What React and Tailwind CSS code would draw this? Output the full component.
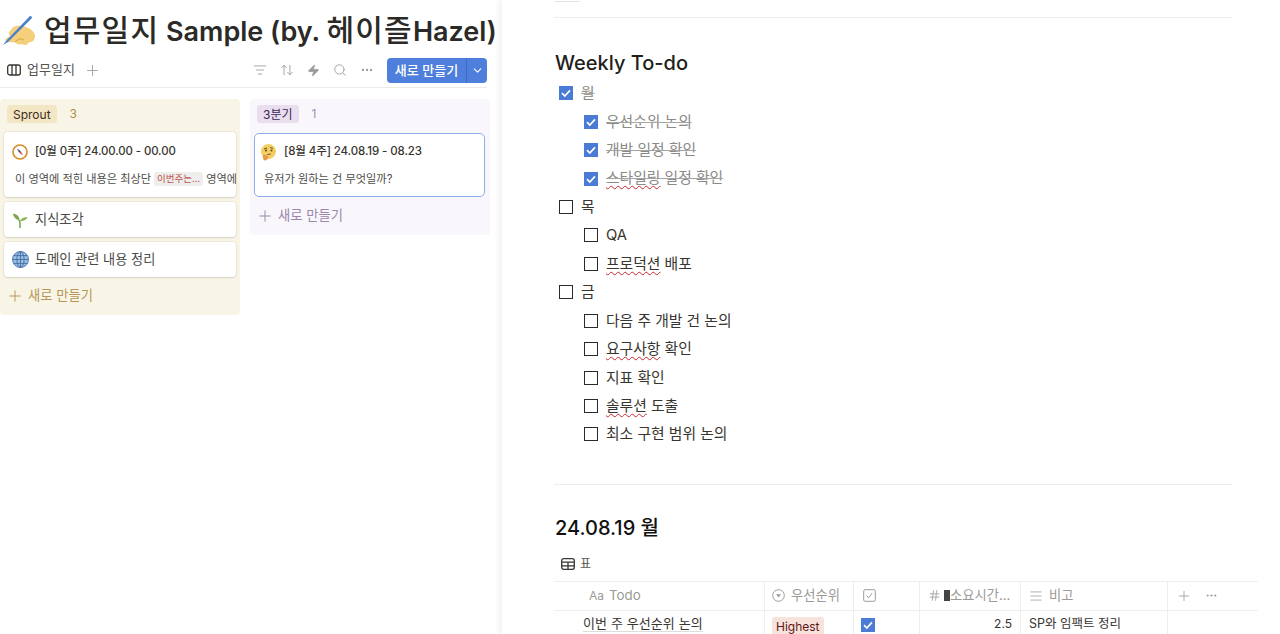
import React from 'react';
import {
  ArrowUpDown,
  AlignJustify,
  ChevronDown,
  Ellipsis,
  Hash,
  ListFilter,
  Plus,
  Search,
  Zap,
} from 'lucide-react';

const FONT = "font-['Inter','Noto_Sans_CJK_KR','Noto_Sans',sans-serif]";

// hand emoji
function WritingHand() {
  return (
    <svg width="32" height="34" viewBox="0 0 32 34">
      <path d="M8 17 C9 13 15 12 19 13 C25 14 32 18 32 23 C32 27 29 30 26 29 C25 32 22 33 19 31 C16 32 13 31 12 29 C9 29 5 30 3 28 C1 26 5 24 8 23 C5 22 5 19 8 17Z" fill="#f4cf7c" />
      <path d="M12 29 C15 26 17 25 21 27" stroke="#d9a441" strokeWidth="1" fill="none" />
      <path d="M0 32 L3 28 L26 4 C27 2 29 3 29 5 L5 29 Z" fill="#4a7fc9" />
    </svg>
  );
}

function Compass() {
  return (
    <svg width="16" height="16" viewBox="0 0 16 16">
      <circle cx="8" cy="8" r="7" fill="#fff" stroke="#d98a1f" strokeWidth="1.6" />
      <path d="M5 4.5 L8.8 7.2 L7.2 8.8Z" fill="#33405a" />
      <path d="M11 11.5 L8.8 7.2 L7.2 8.8Z" fill="#c9465a" />
    </svg>
  );
}

function Seedling() {
  return (
    <svg width="16" height="18" viewBox="0 0 16 18">
      <path d="M8 17 C8 13 8 11 7.5 9" stroke="#7da84f" strokeWidth="1.6" fill="none" />
      <path d="M7.5 9.5 C4.5 9 1.5 6.5 1 2.5 C4.5 3 7.5 5 7.5 9.5Z" fill="#7da84f" />
      <path d="M8 10 C9 7.5 12 6 15.5 6 C14.5 9 11.5 10.5 8 10Z" fill="#8cb65c" />
    </svg>
  );
}

function Globe() {
  return (
    <svg width="17" height="17" viewBox="0 0 17 17">
      <circle cx="8.5" cy="8.5" r="8" fill="#9cbce0" stroke="#4f7fb8" />
      <ellipse cx="8.5" cy="8.5" rx="3.6" ry="8" fill="none" stroke="#3f6fa8" strokeWidth="0.9" />
      <path d="M8.5 .5 V16.5 M.5 8.5 H16.5 M1.8 4.6 H15.2 M1.8 12.4 H15.2" stroke="#3f6fa8" strokeWidth="0.9" />
    </svg>
  );
}

function Thinking() {
  return (
    <svg width="15" height="17" viewBox="0 0 15 17">
      <circle cx="7.5" cy="7.5" r="7.5" fill="#f3cf63" />
      <path d="M3 5 L6 4 M9 3.5 L12 4.5" stroke="#6b4f1d" strokeWidth="1" />
      <circle cx="5" cy="6.5" r="1" fill="#5a4218" />
      <circle cx="10.5" cy="6.5" r="1" fill="#5a4218" />
      <path d="M6 10.5 L10 10" stroke="#8a5f22" strokeWidth="1" />
      <path d="M2 11 C4 10 7 12 7.5 13 C7 15 5 17 3.5 16.5 C2 16 1.5 13 2 11Z" fill="#e89a45" />
    </svg>
  );
}

function TableIcon() {
  return (
    <svg width="14" height="12" viewBox="0 0 14 12" fill="none" stroke="#37352f" strokeWidth="1.3">
      <rect x="0.7" y="0.7" width="12.6" height="10.6" rx="2" />
      <path d="M0.7 4.2 H13.3 M0.7 7.8 H13.3 M7 4.2 V11.3" />
    </svg>
  );
}

function Check({ on }) {
  if (on) {
    return (
      <span className="w-[14px] h-[14px] bg-[#4a7bd5] flex items-center justify-center shrink-0">
        <svg width="12" height="12" viewBox="0 0 12 12" fill="none">
          <path d="M2 6.2 L4.8 9 L10 3.4" stroke="#fff" strokeWidth="1.7" />
        </svg>
      </span>
    );
  }
  return <span className="w-[14px] h-[14px] border-[1.5px] border-[#2a2a2a] shrink-0" />;
}

function Todo({ indent, on, children }) {
  return (
    <div className={`h-[28.45px] flex items-center gap-[8px] text-[14.8px] ${indent ? 'pl-[29px]' : 'pl-[4px]'} ${on ? 'text-[#8a8a87]' : 'text-[#37352f]'}`}>
      <Check on={on} />
      <span className={on ? 'line-through decoration-[#a5a5a2]' : ''}>{children}</span>
    </div>
  );
}

function Typo({ children }) {
  return <span className="underline decoration-wavy decoration-[#c9282d] decoration-1 underline-offset-2">{children}</span>;
}

function Card({ children, className = '' }) {
  return (
    <div className={`bg-white rounded-[4px] shadow-[0_0_0_1px_rgba(15,15,15,0.05),0_1px_2px_rgba(15,15,15,0.1)] ${className}`}>
      {children}
    </div>
  );
}

function AddNew({ className }) {
  return (
    <div className={`flex items-center gap-[4px] pl-[2px] text-[13.3px] ${className}`}>
      <Plus size={18} strokeWidth={1.3} />
      <span>새로 만들기</span>
    </div>
  );
}

function Board() {
  return (
    <div className="flex items-start gap-[10px] mt-[11px]">
      <div className="w-[240px] h-[216px] shrink-0 bg-[#f9f5e6] rounded-[4px] px-[4px] pt-[6px]">
        <div className="flex items-center h-[18px] pl-[3px]">
          <span className="px-[6px] h-[18px] leading-[19px] rounded-[3px] bg-[#f3e6c4] text-[12px] text-[#402c1b]">Sprout</span>
          <span className="ml-[13px] text-[12px] text-[#b08d46]">3</span>
        </div>
        <div className="flex flex-col gap-[5px] mt-[9px]">
          <Card className="h-[65px] overflow-hidden">
            <div className="flex items-center gap-[7px] pl-[8px] h-[38px] text-[11.4px] font-medium tracking-[-0.1px] text-[#37352f] pt-[1px]">
              <Compass />
              <span>[0월 0주] 24.00.00 - 00.00</span>
            </div>
            <div className="flex items-center pl-[11px] text-[11.2px] text-[#4e4d49] whitespace-nowrap mt-[1px]">
              <span>이 영역에 적힌 내용은 최상단</span>
              <span className="mx-[3px] px-[3px] h-[14px] leading-[14px] rounded-[3px] bg-[#eeeeec] text-[#c0504d] text-[9.5px]">이번주는...</span>
              <span>영역에</span>
            </div>
          </Card>
          <Card className="h-[35px] flex items-center gap-[7px] pl-[8px] text-[13.2px] text-[#4a4944]">
            <Seedling />
            <span>지식조각</span>
          </Card>
          <Card className="h-[35px] flex items-center gap-[6px] pl-[8px] text-[13.2px] text-[#4a4944]">
            <Globe />
            <span>도메인 관련 내용 정리</span>
          </Card>
        </div>
        <AddNew className="text-[#b5975a] mt-[9px]" />
      </div>
      <div className="w-[240px] h-[136px] shrink-0 bg-[#f9f7fc] rounded-[4px] px-[4px] pt-[6px]">
        <div className="flex items-center h-[18px] pl-[3px]">
          <span className="px-[6px] h-[18px] leading-[19px] rounded-[3px] bg-[#e8deee] text-[12px] text-[#412454]">3분기</span>
          <span className="ml-[13px] text-[12px] text-[#a48bbd]">1</span>
        </div>
        <div className="w-[231px] h-[64px] mt-[10px] bg-white rounded-[5px] border-[1.5px] border-[#8fb0e4]">
          <div className="flex items-center gap-[8px] pl-[6px] h-[36px] text-[11.5px] font-medium tracking-[-0.1px] text-[#37352f]">
            <Thinking />
            <span>[8월 4주] 24.08.19 - 08.23</span>
          </div>
          <div className="pl-[9px] text-[11.2px] text-[#4e4d49] mt-[1px]">유저가 원하는 건 무엇일까?</div>
        </div>
        <AddNew className="text-[#9b86ad] mt-[9px]" />
      </div>
    </div>
  );
}

function LeftPanel() {
  return (
    <div className="w-[502px] h-full shrink-0 overflow-hidden bg-white">
      <div className="flex items-center h-[38px] mt-[11px] pl-[3px] whitespace-nowrap">
        <WritingHand />
        <h1 className="ml-[9px] text-[27px] font-semibold text-[#2b2a26]">
          <span className="text-[30px] font-medium tracking-[1.2px]">업무일지</span> Sample (by.{' '}
          <span className="text-[30px] font-medium tracking-[1.2px]">헤이즐</span>Hazel)
        </h1>
      </div>
      <div className="w-[487px] h-[39px] border-b border-[#ecebe9] flex items-center pl-[7px] pt-[4px]">
        <svg width="14" height="14" viewBox="0 0 14 14" fill="none" stroke="#37352f" strokeWidth="1.3">
          <rect x="0.7" y="2" width="12.6" height="10" rx="2" />
          <path d="M5 2 V12 M9 2 V12" />
        </svg>
        <span className="ml-[6px] text-[13px] text-[#55534e]">업무일지</span>
        <Plus size={17} strokeWidth={1.2} className="ml-[9px] text-[#9b9a97]" />
        <div className="ml-auto flex items-center gap-[13px] text-[#9b9a97]">
          <ListFilter size={14} strokeWidth={1.5} />
          <ArrowUpDown size={14} strokeWidth={1.5} />
          <Zap size={13} strokeWidth={1.5} fill="#9b9a97" />
          <Search size={14} strokeWidth={1.5} />
          <Ellipsis size={14} strokeWidth={2} />
        </div>
        <div className="ml-[13px] w-[100px] h-[25px] flex rounded-[4px] bg-[#4f7fdc] text-white">
          <span className="w-[80px] text-center leading-[25px] text-[13px] font-medium border-r border-[#3f6bc2]">새로 만들기</span>
          <span className="flex-1 flex items-center justify-center">
            <ChevronDown size={13} strokeWidth={2} />
          </span>
        </div>
      </div>
      <Board />
    </div>
  );
}

function HeaderCell({ className = '', children }) {
  return <div className={`h-full flex items-center border-r border-[#eeeeed] text-[13.3px] text-[#9b9a97] ${className}`}>{children}</div>;
}

function TablePreview() {
  return (
    <div className="w-[704px] mt-[8px]">
      <div className="h-[30px] flex border-y border-[#eeeeed]">
        <HeaderCell className="w-[211px] pl-[35px]">
          <span className="text-[12px] mr-[5px]">Aa</span>Todo
        </HeaderCell>
        <HeaderCell className="w-[89px] pl-[7px] gap-[6px]">
          <svg width="13" height="13" viewBox="0 0 13 13" fill="none" stroke="#9b9a97">
            <circle cx="6.5" cy="6.5" r="5.8" />
            <path d="M4 5.2 H9 L6.5 8.4Z" fill="#9b9a97" stroke="none" />
          </svg>
          우선순위
        </HeaderCell>
        <HeaderCell className="w-[66px] pl-[9px]">
          <svg width="13" height="13" viewBox="0 0 13 13" fill="none" stroke="#9b9a97">
            <rect x="0.7" y="0.7" width="11.6" height="11.6" rx="1.5" />
            <path d="M3.6 6.6 L5.6 8.8 L9.2 4" />
          </svg>
        </HeaderCell>
        <HeaderCell className="w-[101px] pl-[8px] whitespace-nowrap overflow-hidden">
          <Hash size={13} strokeWidth={1.5} />
          <span className="w-[6px] h-[11px] bg-[#444] ml-[3px] mr-0 border-2 border-[#444] bg-clip-content" />
          <span>소요시간...</span>
        </HeaderCell>
        <HeaderCell className="w-[147px] pl-[8px] gap-[6px]">
          <AlignJustify size={14} strokeWidth={1.3} />
          비고
        </HeaderCell>
        <div className="flex-1 flex items-center pl-[8px] gap-[13px] text-[#9b9a97]">
          <Plus size={16} strokeWidth={1.2} />
          <Ellipsis size={13} />
        </div>
      </div>
      <div className="h-[30px] flex text-[13px] text-[#37352f]">
        <div className="w-[211px] border-r border-[#eeeeed] pl-[29px] pt-[3px]">
          <span className="border-b border-[#dddddb] tracking-[0.1px]">이번 주 우선순위 논의</span>
        </div>
        <div className="w-[89px] border-r border-[#eeeeed] pl-[7px] pt-[6px]">
          <span className="block w-fit px-[4px] h-[20px] leading-[20px] rounded-[3px] bg-[#f8e2dc] text-[12px] text-[#5d1715]">Highest</span>
        </div>
        <div className="w-[66px] border-r border-[#eeeeed] pl-[7px] pt-[7px]">
          <Check on />
        </div>
        <div className="w-[101px] border-r border-[#eeeeed] pr-[8px] text-right text-[12px] pt-[4px]">2.5</div>
        <div className="w-[147px] border-r border-[#eeeeed] pl-[8px] text-[12.5px] pt-[4px]">SP와 임팩트 정리</div>
      </div>
    </div>
  );
}

function RightPanel() {
  return (
    <div className="flex-1 h-full overflow-hidden bg-white shadow-[-3px_0_6px_rgba(15,15,15,0.06)] pl-[52px] relative">
      <div className="w-[25px] h-px bg-[#e4e4e2] mt-[1px] ml-[1px]" />
      <div className="w-[678px] h-px bg-[#ececea] mt-[15px]" />
      <div className="pl-[1px]">
        <h2 className="mt-[32px] text-[20px] leading-[26px] font-medium text-[#1f1e1b]">Weekly To-do</h2>
        <div className="mt-[3px]">
          <Todo on>월</Todo>
          <Todo indent on>우선순위 논의</Todo>
          <Todo indent on>개발 일정 확인</Todo>
          <Todo indent on>
            <Typo>스타일링</Typo> 일정 확인
          </Todo>
          <Todo>목</Todo>
          <Todo indent>QA</Todo>
          <Todo indent>
            <Typo>프로덕션</Typo> 배포
          </Todo>
          <Todo>금</Todo>
          <Todo indent>다음 주 개발 건 논의</Todo>
          <Todo indent>
            <Typo>요구사항</Typo> 확인
          </Todo>
          <Todo indent>지표 확인</Todo>
          <Todo indent>
            <Typo>솔루션</Typo> 도출
          </Todo>
          <Todo indent>최소 구현 범위 논의</Todo>
        </div>
      </div>
      <div className="w-[678px] h-px bg-[#ececea] mt-[35px]" />
      <h2 className="pl-[1px] mt-[30px] text-[20px] leading-[26px] font-medium text-[#111]">24.08.19 월</h2>
      <div className="mt-[14px] h-[18px] flex items-center gap-[5px] pl-[7px] text-[12px] text-[#55534e]">
        <TableIcon />
        표
      </div>
      <TablePreview />
    </div>
  );
}

export default function App() {
  return (
    <div className={`${FONT} w-[1280px] h-[634px] overflow-hidden flex bg-white`}>
      <LeftPanel />
      <RightPanel />
    </div>
  );
}
